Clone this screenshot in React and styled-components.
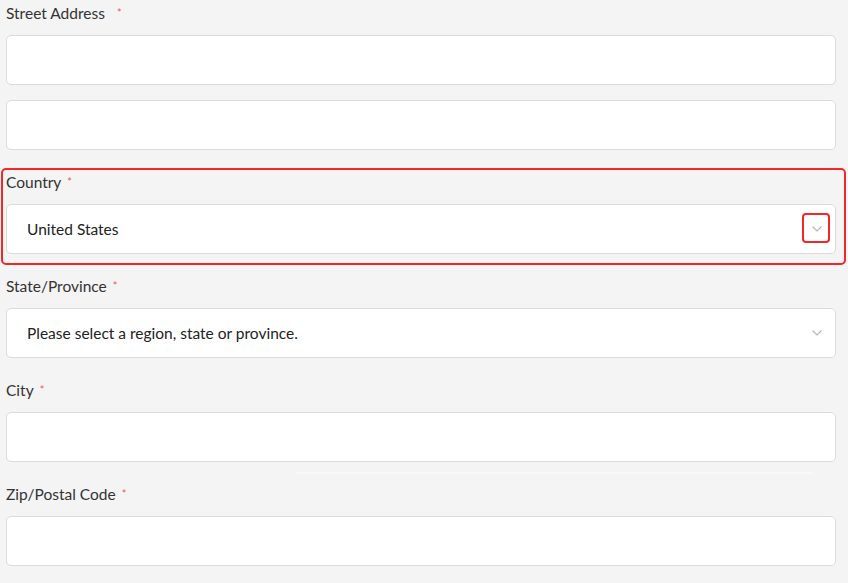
import React from "react";
import styled, { createGlobalStyle } from "styled-components";

const Global = createGlobalStyle`
  html, body { margin: 0; padding: 0; background: #f4f4f4; }
  body { font-family: Lato, "Open Sans", sans-serif; color: #333; }
  * { box-sizing: border-box; }
`;

const Form = styled.form`
  display: flex;
  flex-direction: column;
  padding: 3px 12px 0 6px;
  width: 848px;
`;

const Field = styled.div`
  position: relative;
  display: flex;
  flex-direction: column;
  gap: 12px;
  margin-bottom: 22px;
`;

const InputStack = styled.div`
  display: flex;
  flex-direction: column;
  gap: 15px;
`;

const Label = styled.label`
  display: block;
  height: 20px;
  font-size: 15.5px;
  line-height: 20px;
  color: #333;
`;

const Star = styled.span`
  color: #e85a5a;
  font-size: 11px;
  line-height: 0;
  margin-left: ${(p) => (p.$wide ? "12px" : "6px")};
  position: relative;
  top: -2px;
`;

const Input = styled.div`
  height: 50px;
  background: #fff;
  border: 1px solid #dcdcdc;
  border-radius: 5px;
`;

const Select = styled.div`
  height: 50px;
  background: #fff;
  border: 1px solid #dcdcdc;
  border-radius: 5px;
  display: flex;
  align-items: center;
  justify-content: space-between;
  padding: 0 13px 0 20px;
  font-size: 15.5px;
  color: #222;
`;

const Chevron = styled.span`
  position: relative;
  display: flex;
  align-items: center;
  justify-content: center;
  width: 10px;
  height: 10px;
`;

const Highlight = styled.div`
  position: absolute;
  left: -5px;
  top: -4px;
  right: -10px;
  bottom: -11px;
  border: 2px solid #f2272a;
  border-radius: 5px;
  pointer-events: none;
`;

const IconHighlight = styled.div`
  position: absolute;
  left: -10px;
  top: -11px;
  width: 28px;
  height: 30px;
  border: 2px solid #f2272a;
  border-radius: 4px;
  pointer-events: none;
`;

const Faint = styled.div`
  position: absolute;
  left: 289px;
  width: 518px;
  bottom: -12px;
  height: 2px;
  background: #f8f8f8;
`;

const ChevronIcon = () => (
  <svg width="10" height="6" viewBox="0 0 10 6" fill="none">
    <path d="M0.5 0.5 L5 5 L9.5 0.5" stroke="#b5b5b5" strokeWidth="1.1" />
  </svg>
);

export default function App() {
  return (
    <>
      <Global />
      <Form>
        <Field>
          <Label>
            Street Address<Star $wide>*</Star>
          </Label>
          <InputStack>
            <Input />
            <Input />
          </InputStack>
        </Field>
        <Field>
          <Highlight />
          <Label>
            Country<Star>*</Star>
          </Label>
          <Select>
            United States
            <Chevron>
              <ChevronIcon />
              <IconHighlight />
            </Chevron>
          </Select>
        </Field>
        <Field>
          <Label>
            State/Province<Star>*</Star>
          </Label>
          <Select>
            Please select a region, state or province.
            <Chevron>
              <ChevronIcon />
            </Chevron>
          </Select>
        </Field>
        <Field>
          <Label>
            City<Star>*</Star>
          </Label>
          <Input />
          <Faint />
        </Field>
        <Field>
          <Label>
            Zip/Postal Code<Star>*</Star>
          </Label>
          <Input />
        </Field>
      </Form>
    </>
  );
}
